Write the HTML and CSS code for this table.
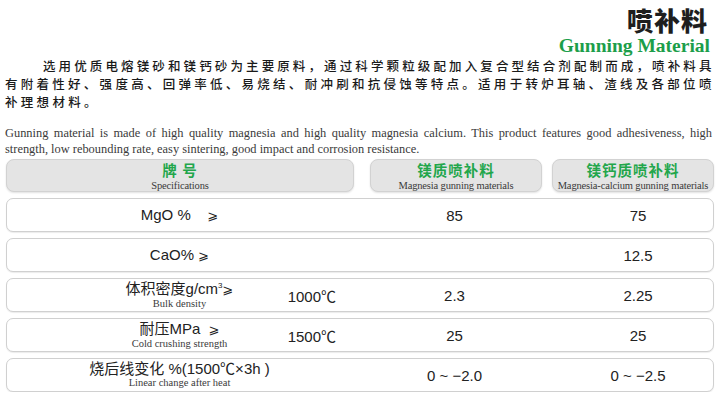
FILE: index.html
```html
<!DOCTYPE html>
<html lang="zh-CN">
<head>
<meta charset="utf-8">
<title>喷补料</title>
<link rel="stylesheet" href="styles.css">
</head>
<body>
<div class="page">
  <header class="head">
    <h1 class="title">喷补料</h1>
    <div class="subtitle">Gunning Material</div>
  </header>
  <p class="intro-cn"><span class="ln ln-first">选用优质电熔镁砂和镁钙砂为主要原料，通过科学颗粒级配加入复合型结合剂配制而成，喷补料具</span><span class="ln">有附着性好、强度高、回弹率低、易烧结、耐冲刷和抗侵蚀等特点。适用于转炉耳轴、渣线及各部位喷</span><span class="ln ln-last">补理想材料。</span></p>
  <p class="intro-en">Gunning material is made of high quality magnesia and high quality magnesia calcium. This product features good adhesiveness, high strength, low rebounding rate, easy sintering, good impact and corrosion resistance.</p>

  <div class="table">
    <div class="hd-row">
      <div class="hd-box hd-spec"><span class="hd-cn">牌 号</span><span class="hd-en">Specifications</span></div>
      <div class="hd-box hd-mg"><span class="hd-cn">镁质喷补料</span><span class="hd-en">Magnesia gunning materials</span></div>
      <div class="hd-box hd-ca"><span class="hd-cn">镁钙质喷补料</span><span class="hd-en">Magnesia-calcium gunning materials</span></div>
    </div>

    <div class="row">
      <div class="c-label"><div class="lab"><span class="lab-main">MgO %&nbsp;&nbsp;&nbsp;&nbsp;<span class="ge">⩾</span></span></div></div>
      <div class="c-val">85</div>
      <div class="c-val c3">75</div>
    </div>
    <div class="row">
      <div class="c-label"><div class="lab"><span class="lab-main">CaO% <span class="ge">⩾</span></span></div></div>
      <div class="c-val"></div>
      <div class="c-val c3">12.5</div>
    </div>
    <div class="row">
      <div class="c-label">
        <div class="lab"><span class="lab-main">体积密度g/cm<sup>3</sup><span class="ge">⩾</span></span><span class="lab-sub">Bulk density</span></div>
        <div class="temp">1000℃</div>
      </div>
      <div class="c-val">2.3</div>
      <div class="c-val c3">2.25</div>
    </div>
    <div class="row">
      <div class="c-label">
        <div class="lab"><span class="lab-main">耐压MPa&nbsp;&nbsp;<span class="ge">⩾</span></span><span class="lab-sub">Cold crushing strength</span></div>
        <div class="temp">1500℃</div>
      </div>
      <div class="c-val">25</div>
      <div class="c-val c3">25</div>
    </div>
    <div class="row">
      <div class="c-label">
        <div class="lab"><span class="lab-main">烧后线变化 %(1500℃×3h )</span><span class="lab-sub">Linear change after heat</span></div>
      </div>
      <div class="c-val">0 ~ −2.0</div>
      <div class="c-val c3">0 ~ −2.5</div>
    </div>
  </div>
</div>
</body>
</html>
```

FILE: styles.css
```css
html, body {
  margin: 0;
  padding: 0;
  background: #ffffff;
}

.page {
  width: 709px;
  padding: 0 6px 0 5px;
  font-family: "Liberation Sans", "Noto Sans CJK SC", sans-serif;
  color: #222;
}

.head {
  display: flex;
  flex-direction: column;
  align-items: flex-end;
  padding-top: 5px;
}

.title {
  margin: 0 6px 0 0;
  font-family: "Noto Sans CJK SC", sans-serif;
  font-weight: 900;
  font-size: 26px;
  line-height: 30px;
  color: #1e1e1e;
  letter-spacing: 1px;
}

.subtitle {
  margin-right: 4px;
  font-family: "Liberation Serif", "Noto Sans CJK SC", serif;
  font-weight: bold;
  font-size: 19.5px;
  line-height: 22px;
  color: #1c9e4a;
}

.intro-cn {
  margin: 0;
  font-family: "Noto Sans CJK SC", sans-serif;
  font-weight: 500;
  font-size: 12.5px;
  line-height: 18px;
  letter-spacing: 2.6px;
  color: #1a1a1a;
}

.ln {
  display: block;
  white-space: nowrap;
  text-align: justify;
  text-align-last: justify;
}

.ln-first {
  padding-left: 38px;
}

.ln-last {
  text-align: left;
  text-align-last: left;
  letter-spacing: 3.3px;
}

.intro-en {
  margin: 14px 2px 0 0;
  font-family: "Liberation Serif", serif;
  font-size: 12.4px;
  line-height: 16px;
  text-align: justify;
  color: #3a3a3a;
}

.table {
  margin-top: 2px;
  padding-left: 1px;
  display: flex;
  flex-direction: column;
  gap: 6px;
}

.hd-row {
  display: flex;
  height: 33px;
}

.hd-box {
  box-sizing: border-box;
  height: 33px;
  background: #e4e4e4;
  border: 1px solid #d2d2d2;
  border-radius: 8px;
  box-shadow: 0 1px 2px rgba(0, 0, 0, 0.12);
  display: flex;
  flex-direction: column;
  align-items: center;
  justify-content: center;
}

.hd-spec { width: 348px; }
.hd-mg { width: 172px; margin-left: 16px; }
.hd-ca { width: 162px; margin-left: 10px; }

.hd-cn {
  display: block;
  font-family: "Noto Sans CJK SC", sans-serif;
  font-weight: bold;
  font-size: 14.5px;
  line-height: 20px;
  letter-spacing: 1px;
  color: #22a64b;
}

.hd-en {
  display: block;
  font-family: "Liberation Serif", serif;
  font-size: 10.5px;
  line-height: 12px;
  letter-spacing: -0.15px;
  color: #3a3a3a;
}

.row {
  box-sizing: border-box;
  height: 34px;
  background: #fff;
  border: 1.5px solid #d0d0d0;
  border-radius: 7px;
  box-shadow: 0 1px 1px rgba(0, 0, 0, 0.08);
  display: grid;
  grid-template-columns: 345px 205px 1fr;
  align-items: center;
}

.c-label {
  display: grid;
  align-items: center;
  height: 100%;
}

.c-label > * {
  grid-area: 1 / 1;
}

.lab {
  justify-self: center;
  display: flex;
  flex-direction: column;
  align-items: center;
}

.lab-main {
  font-size: 15px;
  line-height: 16px;
  color: #222;
  white-space: nowrap;
}

.lab-main sup {
  font-size: 8px;
  vertical-align: 6px;
  line-height: 0;
}

.ge {
  font-family: "DejaVu Sans", sans-serif;
  font-size: 13px;
}

.lab-sub {
  font-family: "Liberation Serif", serif;
  font-size: 10.5px;
  line-height: 12px;
  color: #3a3a3a;
}

.temp {
  justify-self: end;
  margin-right: 16px;
  font-size: 15px;
  color: #222;
}

.c-val {
  text-align: center;
  font-size: 15px;
  color: #222;
}

.c3 {
  padding-left: 6px;
}
```
